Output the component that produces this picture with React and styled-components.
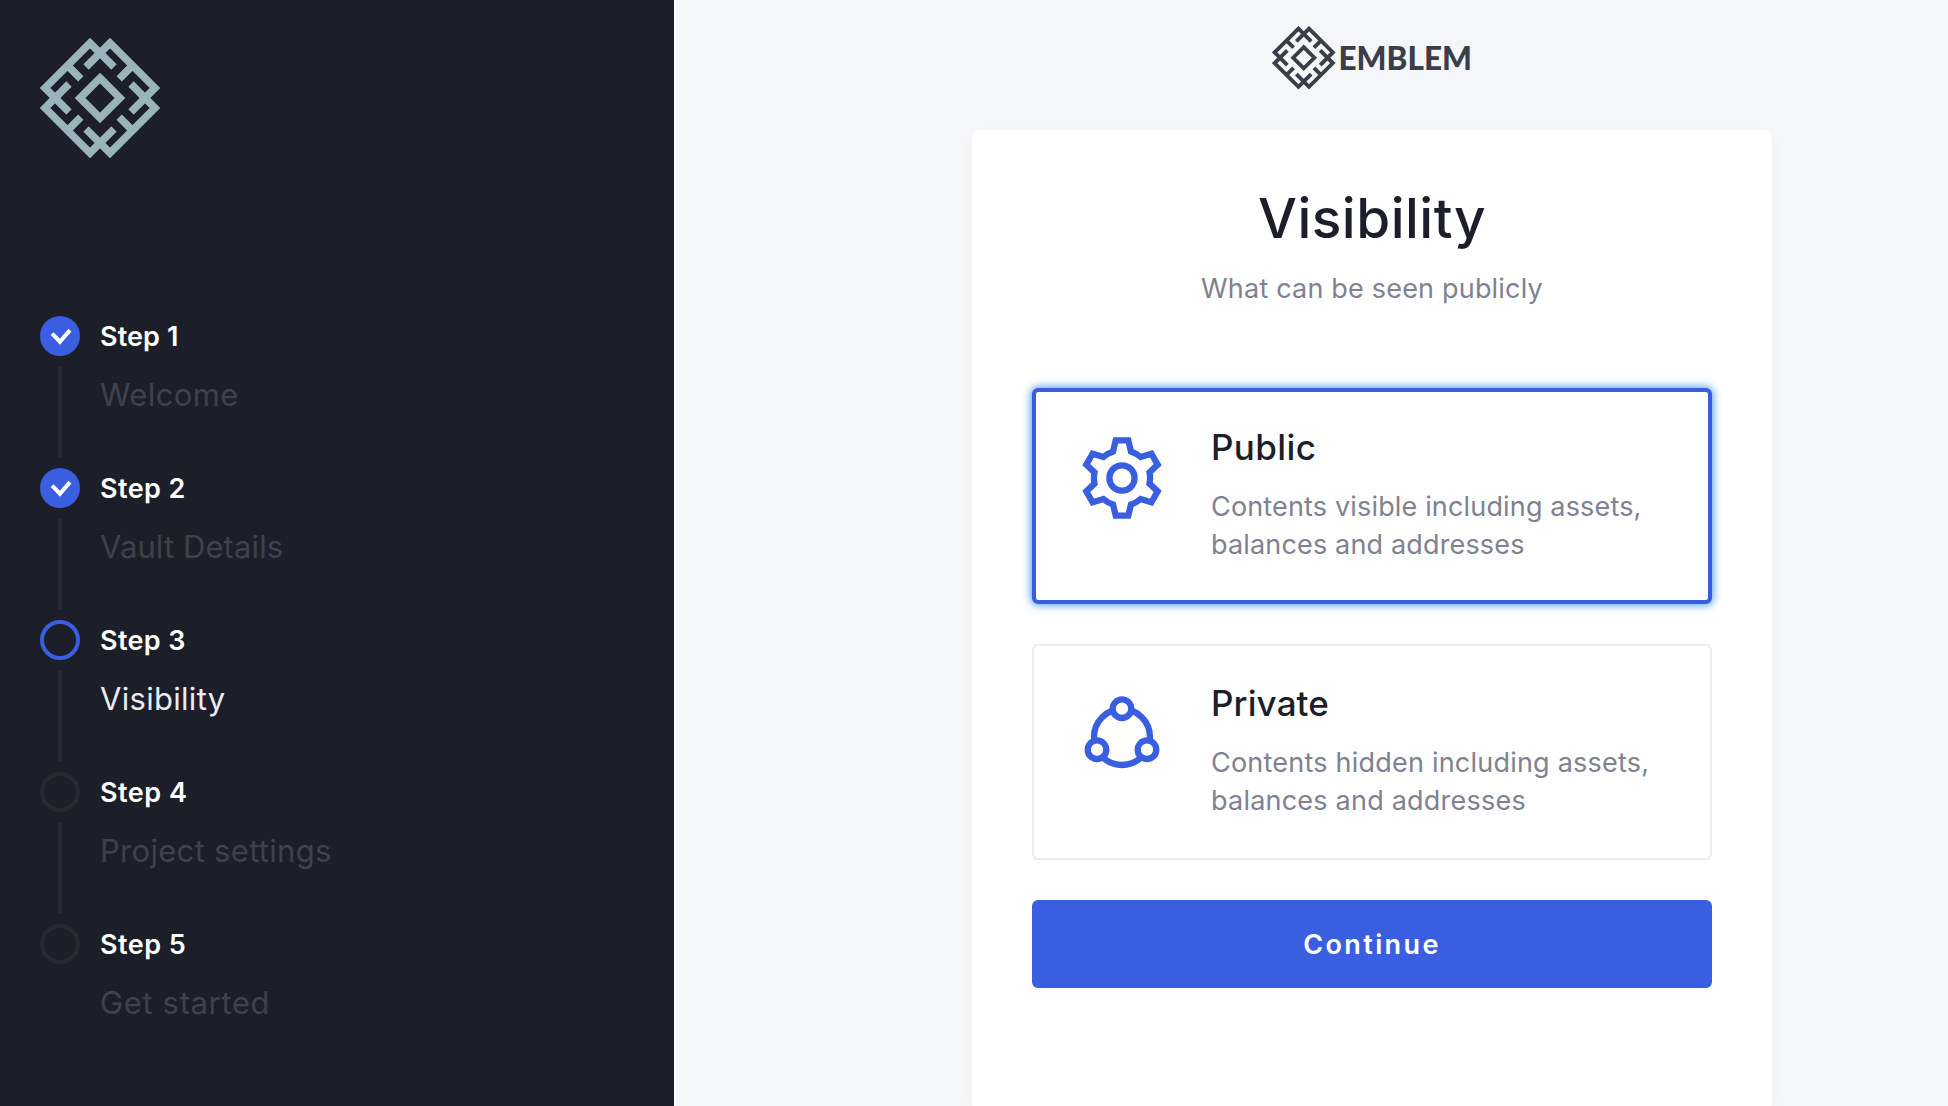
import React from 'react';
import styled, { createGlobalStyle } from 'styled-components';

const colors = {
  ink: '#1c1e29',
  blue: '#395fe0',
  muted: '#808191',
  dim: '#3f414e',
  track: '#272933',
};

const GlobalStyle = createGlobalStyle`
  * { box-sizing: border-box; }
  body { margin: 0; background: #f5f6f8; }
`;

const Page = styled.div`
  display: flex;
  height: 1106px;
  overflow: hidden;
  font-family: Inter, "Liberation Sans", sans-serif;
  font-kerning: normal;
`;

const Sidebar = styled.aside`
  flex: none;
  width: 674px;
  padding: 38px 40px;
  background: ${colors.ink};
`;

const SidebarLogo = styled.div`
  display: flex;
  margin-bottom: 158px;
`;

const StepList = styled.ol`
  list-style: none;
  margin: 0;
  padding: 0;
`;

const StepItem = styled.li`
  display: grid;
  grid-template-columns: 40px 1fr;
  column-gap: 20px;
  height: 152px;
`;

const StepRail = styled.div`
  display: flex;
  flex-direction: column;
  align-items: center;
  gap: 10px;
`;

const StepMark = styled.span`
  display: flex;
  flex: none;
  width: 40px;
  height: 40px;
  border-radius: 50%;
  background: ${p => (p.$state === 'done' ? colors.blue : 'transparent')};
  border: ${p => (p.$state === 'done' ? '0' : `4px solid ${p.$state === 'current' ? colors.blue : colors.track}`)};
`;

const StepLine = styled.span`
  width: 4px;
  height: 92px;
  background: ${colors.track};
`;

const StepName = styled.div`
  padding-top: 1px;
  font-size: 27px;
  font-weight: 600;
  line-height: 40px;
  letter-spacing: ${p => p.$spacing}px;
  color: #fff;
`;

const StepCaption = styled.div`
  margin-top: 18px;
  font-size: 31px;
  line-height: 40px;
  letter-spacing: ${p => p.$spacing}px;
  color: ${p => (p.$current ? '#ebebf0' : colors.dim)};
`;

const Main = styled.main`
  flex: 1;
  display: flex;
  flex-direction: column;
  align-items: center;
  padding-left: 120px;
  border-left: 2px solid #fff;
  background: #f5f6f8;
`;

const Brand = styled.header`
  display: flex;
  align-items: center;
  gap: 3px;
  height: 130px;
  padding-bottom: 14px;
`;

const BrandName = styled.span`
  font-family: Lato, "Liberation Sans", sans-serif;
  font-size: 31.5px;
  font-weight: 900;
  line-height: 40px;
  color: #3b3d49;
`;

const Panel = styled.section`
  display: flex;
  flex-direction: column;
  flex: 1;
  width: 800px;
  padding: 56px 60px 0;
  border-radius: 6px 6px 0 0;
  background: #fff;
  box-shadow: 0 4px 16px rgba(28, 30, 41, 0.03);
`;

const Title = styled.h1`
  margin: 0;
  font-size: 55px;
  font-weight: 500;
  line-height: 64px;
  letter-spacing: 0.48px;
  text-align: center;
  color: ${colors.ink};
`;

const Subtitle = styled.p`
  margin: 20px 0 80px;
  font-size: 27px;
  line-height: 38px;
  letter-spacing: 0.19px;
  text-align: center;
  color: ${colors.muted};
`;

const Options = styled.div`
  display: flex;
  flex-direction: column;
  gap: 40px;
`;

const Option = styled.div`
  --edge: ${p => (p.$selected ? '4px' : '2px')};
  display: flex;
  align-items: flex-start;
  gap: 41px;
  height: 216px;
  padding: calc(37px - var(--edge)) calc(20px - var(--edge)) 0 calc(42px - var(--edge));
  border: var(--edge) solid ${p => (p.$selected ? colors.blue : '#ebebf0')};
  border-radius: 6px;
  background: #fff;
  box-shadow: ${p => (p.$selected ? '0 0 9px 1px rgba(40, 135, 235, 0.85)' : 'none')};
`;

const OptionIcon = styled.svg`
  flex: none;
  width: 96px;
  height: 96px;
  margin-top: 5px;
  fill: none;
  stroke: ${colors.blue};
  stroke-width: 6.3;
`;

const OptionTitle = styled.h2`
  margin: 0 0 19px;
  font-size: 35px;
  font-weight: 500;
  line-height: 44px;
  letter-spacing: ${p => p.$spacing}px;
  color: ${colors.ink};
`;

const OptionText = styled.p`
  margin: 0;
  font-size: 27px;
  line-height: 38px;
  letter-spacing: ${p => p.$spacing}px;
  color: ${colors.muted};
`;

const Button = styled.button`
  height: 88px;
  margin-top: 40px;
  padding: 2px 0 0;
  border: 0;
  border-radius: 6px;
  background: ${colors.blue};
  font-family: inherit;
  font-size: 27px;
  font-weight: 600;
  line-height: 40px;
  letter-spacing: 2.4px;
  color: #fff;
`;

const quarterTurns = [0, 90, 180, 270];

function Emblem({ size, color, weight = 7.5 }) {
  return (
    <svg width={size} height={size} viewBox="-60 -60 120 120" fill="none" stroke={color} strokeWidth={weight}>
      <path d="M0-20 20 0 0 20-20 0Z" />
      {quarterTurns.map(a => (
        <path
          key={a}
          transform={`rotate(${a})`}
          d="M14-31-10-55-55-10-31 14M-32.5-32.5-19.2-19.2"
        />
      ))}
    </svg>
  );
}

const gearPath = (() => {
  const parts = [];
  for (let i = 0; i < 6; i += 1) {
    const a = (i * Math.PI) / 3;
    const at = (x, y) =>
      `${(x * Math.cos(a) - y * Math.sin(a)).toFixed(2)} ${(x * Math.sin(a) + y * Math.cos(a)).toFixed(2)}`;
    parts.push(
      `${i ? 'A28 28 0 0 1' : 'M'}${at(-8.9, -26.6)}L${at(-6.3, -37.6)}L${at(6.3, -37.6)}L${at(8.9, -26.6)}`
    );
  }
  return `${parts.join('')}A28 28 0 0 1 -8.9 -26.6Z`;
})();

function GearIcon() {
  return (
    <OptionIcon viewBox="-48 -48 96 96">
      <path d={gearPath} />
      <circle r="12.6" />
    </OptionIcon>
  );
}

function NodesIcon() {
  return (
    <OptionIcon viewBox="-48 -48 96 96">
      <circle cy="3" r="28" />
      <g fill="#fff">
        <circle cy="-25.3" r="9.3" />
        <circle cx="-25" cy="15.7" r="9.3" />
        <circle cx="25" cy="15.7" r="9.3" />
      </g>
    </OptionIcon>
  );
}

function CheckIcon() {
  return (
    <svg width="40" height="40" viewBox="0 0 40 40" fill="none" stroke="#fff" strokeWidth="4.1">
      <path d="M12.2 17.6 19.9 25.8 30 14.2" />
    </svg>
  );
}

const steps = [
  { name: 'Step 1', caption: 'Welcome', state: 'done', nameSpacing: 0.1, spacing: 0.38 },
  { name: 'Step 2', caption: 'Vault Details', state: 'done', nameSpacing: 0.43, spacing: 0.1 },
  { name: 'Step 3', caption: 'Visibility', state: 'current', nameSpacing: 0.35, spacing: 0.3 },
  { name: 'Step 4', caption: 'Project settings', state: 'todo', nameSpacing: 0.5, spacing: 0.3 },
  { name: 'Step 5', caption: 'Get started', state: 'todo', nameSpacing: 0.45, spacing: 0.64 },
];

const options = [
  {
    title: 'Public',
    lines: ['Contents visible including assets,', 'balances and addresses'],
    icon: GearIcon,
    selected: true,
    spacing: 0.4,
    textSpacing: 0.16,
  },
  {
    title: 'Private',
    lines: ['Contents hidden including assets,', 'balances and addresses'],
    icon: NodesIcon,
    selected: false,
    spacing: 0.12,
    textSpacing: 0.22,
  },
];

export default function App() {
  return (
    <Page>
      <GlobalStyle />
      <Sidebar>
        <SidebarLogo>
          <Emblem size={120} color="#9ab4bc" />
        </SidebarLogo>
        <StepList>
          {steps.map((step, i) => (
            <StepItem key={step.name}>
              <StepRail>
                <StepMark $state={step.state}>{step.state === 'done' && <CheckIcon />}</StepMark>
                {i < steps.length - 1 && <StepLine />}
              </StepRail>
              <div>
                <StepName $spacing={step.nameSpacing}>{step.name}</StepName>
                <StepCaption $current={step.state === 'current'} $spacing={step.spacing}>
                  {step.caption}
                </StepCaption>
              </div>
            </StepItem>
          ))}
        </StepList>
      </Sidebar>
      <Main>
        <Brand>
          <Emblem size={63.5} color="#3b3d49" weight={7.3} />
          <BrandName>EMBLEM</BrandName>
        </Brand>
        <Panel>
          <Title>Visibility</Title>
          <Subtitle>What can be seen publicly</Subtitle>
          <Options>
            {options.map(({ title, lines, icon: Icon, selected, spacing, textSpacing }) => (
              <Option key={title} $selected={selected}>
                <Icon />
                <div>
                  <OptionTitle $spacing={spacing}>{title}</OptionTitle>
                  <OptionText $spacing={textSpacing}>
                    {lines[0]}
                    <br />
                    {lines[1]}
                  </OptionText>
                </div>
              </Option>
            ))}
          </Options>
          <Button type="button">Continue</Button>
        </Panel>
      </Main>
    </Page>
  );
}
